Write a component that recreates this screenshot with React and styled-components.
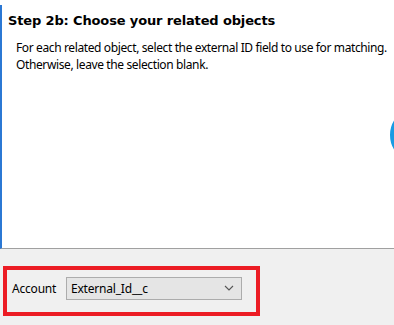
import React from "react";
import styled, { createGlobalStyle } from "styled-components";

const GlobalStyle = createGlobalStyle`
  html, body {
    margin: 0;
    padding: 0;
    background: #ffffff;
  }
  body {
    font-family: "Noto Sans", "Liberation Sans", sans-serif;
  }
`;

const windowBlue = "#2b78d4";
const highlight = "#ec1c24";

const App = () => {
  return (
    <Frame>
      <GlobalStyle />
      <Content>
        <Title>Step 2b: Choose your related objects</Title>
        <Description>
          <p>For each related object, select the external ID field to use for matching.</p>
          <p>Otherwise, leave the selection blank.</p>
        </Description>
        <Spinner width="60" height="60" viewBox="0 0 60 60">
          <circle cx="30" cy="30" r="26" fill="none" stroke="#1a9be3" strokeWidth="4" />
        </Spinner>
      </Content>
      <Footer>
        <Highlight>
          <Label>Account</Label>
          <Select>
            <span>External_Id__c</span>
            <svg width="10" height="6" viewBox="0 0 10 6">
              <path d="M1 1 L5 5 L9 1" fill="none" stroke="#555" strokeWidth="1.1" />
            </svg>
          </Select>
        </Highlight>
      </Footer>
    </Frame>
  );
};

export default App;

const Frame = styled.div`
  width: 394px;
  height: 325px;
  display: flex;
  flex-direction: column;
  overflow: hidden;
  position: relative;
`;

const Content = styled.div`
  position: relative;
  margin-top: 5px;
  height: 244px;
  border-left: 2px solid ${windowBlue};
  border-bottom: 1px solid #a0a0a0;
  background: #fff;
  padding: 8px 0 0 6px;
  box-sizing: border-box;
`;

const Title = styled.h2`
  margin: 0;
  font-family: "DejaVu Sans", "Liberation Sans", sans-serif;
  font-weight: bold;
  font-size: 13px;
  line-height: 16px;
  letter-spacing: -0.14px;
  color: #000;
`;

const Description = styled.div`
  margin-top: 10px;
  padding-left: 8px;
  font-size: 12px;
  line-height: 17px;
  letter-spacing: -0.38px;
  white-space: nowrap;
  color: #000;

  p {
    margin: 0;
  }
`;

const Spinner = styled.svg`
  position: absolute;
  left: 386px;
  top: 100px;
`;

const Footer = styled.div`
  flex: 1;
  background: #f0f0f0;
  padding: 17px 0 0 3px;
  box-sizing: border-box;
`;

const Highlight = styled.div`
  width: 257px;
  height: 50px;
  box-sizing: border-box;
  border: 4px solid ${highlight};
  display: flex;
  align-items: center;
  padding: 0 14px 6px 5px;
  gap: 5px;
`;

const Label = styled.span`
  font-size: 12px;
  letter-spacing: -0.2px;
  color: #000;
  width: 49px;
`;

const Select = styled.div`
  flex: 1;
  height: 23px;
  box-sizing: border-box;
  background: #e5e5e5;
  border: 1px solid #acacac;
  display: flex;
  align-items: center;
  justify-content: space-between;
  padding: 0 7px 0 4px;
  font-size: 12px;
  letter-spacing: -0.2px;
  color: #000;
`;
